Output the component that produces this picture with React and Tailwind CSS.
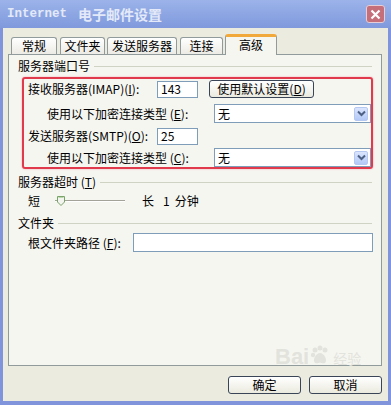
import React from "react";

const Key = ({ k }) => (
  <>
    (<span className="underline">{k}</span>)
  </>
);

function TextBox({ value, width }) {
  return (
    <div
      className={`${width} h-[17px] bg-white border border-[#7f9db9] pl-[3px] flex items-center leading-none`}
    >
      {value}
    </div>
  );
}

function Dropdown() {
  return (
    <div className="w-[157px] h-[19px] bg-white border border-[#7f9db9] flex items-center justify-between pl-[3px] pr-[2px]">
      <span className="leading-none">无</span>
      <div className="w-[14px] h-[14px] rounded-[2px] bg-linear-to-b from-[#dbe5fd] to-[#b3c9f7] border border-[#b5c8f2] flex items-center justify-center">
        <svg width="9" height="7" viewBox="0 0 9 7">
          <path d="M1 1.5 L4.5 5 L8 1.5" fill="none" stroke="#4d6185" strokeWidth="2" />
        </svg>
      </div>
    </div>
  );
}

function GroupTitle({ children }) {
  return (
    <div className="flex items-center h-[14px]">
      <span className="pr-[4px] leading-none">{children}</span>
      <div className="flex-1 border-t border-[#cfd3c4]" />
    </div>
  );
}

function XpButton({ children, width }) {
  return (
    <div
      className={`${width} h-[18px] rounded-[3px] border border-[#3a4558] bg-linear-to-b from-[#ffffff] to-[#ebeadf] flex items-center justify-center leading-none`}
    >
      {children}
    </div>
  );
}

function Tab({ label, width }) {
  return (
    <div
      className={`${width} h-[17px] border border-b-0 border-[#919b9c] rounded-t-[3px] bg-linear-to-b from-[#ffffff] to-[#ecebe5] flex items-center justify-center leading-none`}
    >
      {label}
    </div>
  );
}

export default function App() {
  return (
    <div className="w-[391px] h-[405px] bg-[#8094dc] flex flex-col px-[3px] pb-[4px] font-['Noto_Sans_CJK_SC',sans-serif] text-[12px] text-black">
      {/* title bar */}
      <div className="h-[28px] -mx-[3px] pl-[7px] pr-[6px] flex items-center justify-between bg-linear-to-b from-[#9cb3ea] to-[#7f99dc]">
        <div className="flex items-center font-bold text-[#e3e9f8]">
          <span className="font-['Liberation_Mono',monospace] text-[12.5px]">Internet</span>
          <span className="ml-[11px] text-[14px]">电子邮件设置</span>
        </div>
        <div className="w-[19px] h-[18px] rounded-[3px] bg-[#c46f79] border border-[#e6cdd6] flex items-center justify-center">
          <svg width="11" height="11" viewBox="0 0 11 11">
            <path d="M1.5 1.5 L9.5 9.5 M9.5 1.5 L1.5 9.5" stroke="#ffffff" strokeWidth="2.2" />
          </svg>
        </div>
      </div>

      {/* body */}
      <div className="flex-1 bg-[#ecebe0] flex flex-col pl-[5px] pr-[6px] pt-[5px]">
        <div className="h-[21px] flex items-end pl-[3px]">
          <Tab label="常规" width="w-[46px]" />
          <div className="ml-[3px]">
            <Tab label="文件夹" width="w-[45px]" />
          </div>
          <div className="ml-[2px]">
            <Tab label="发送服务器" width="w-[70px]" />
          </div>
          <div className="ml-[3px]">
            <Tab label="连接" width="w-[43px]" />
          </div>
          <div className="ml-[2px] w-[52px] h-[21px] -mb-px relative z-10 border border-b-0 border-[#919b9c] border-t-[3px] border-t-[#f2a93b] rounded-t-[3px] bg-[#f6f6f1] flex items-center justify-center leading-none pb-[2px]">
            高级
          </div>
        </div>

        {/* panel */}
        <div className="relative h-[312px] border border-[#919b9c] bg-[#f6f6f1] pl-[9px] pr-[9px] pt-[4px] flex flex-col">
          <GroupTitle>服务器端口号</GroupTitle>

          <div className="mt-[4px] ml-[4px] -mr-[1px] h-[92px] border-2 border-[#e23a4d] rounded-[3px] shadow-[0_0_2px_#f3a0aa] flex flex-col">
            <div className="mt-[1px] h-[18px] flex items-center">
              <div className="w-[133px] pl-[4px] leading-none whitespace-nowrap">
                接收服务器(IMAP)<Key k="I" />:
              </div>
              <TextBox value="143" width="w-[41px]" />
              <div className="ml-[11px]">
                <XpButton width="w-[105px]">
                  使用默认设置<Key k="D" />
                </XpButton>
              </div>
            </div>
            <div className="mt-[6px] h-[19px] flex items-center">
              <div className="w-[190px] pl-[23px] leading-none whitespace-nowrap">
                使用以下加密连接类型 <Key k="E" />:
              </div>
              <Dropdown />
            </div>
            <div className="mt-[4px] h-[18px] flex items-center">
              <div className="w-[133px] pl-[4px] leading-none whitespace-nowrap">
                发送服务器(SMTP)<Key k="O" />:
              </div>
              <TextBox value="25" width="w-[41px]" />
            </div>
            <div className="mt-[3px] h-[19px] flex items-center">
              <div className="w-[190px] pl-[23px] leading-none whitespace-nowrap">
                使用以下加密连接类型 <Key k="C" />:
              </div>
              <Dropdown />
            </div>
          </div>

          <div className="mt-[6px]">
            <GroupTitle>
              服务器超时 <Key k="T" />
            </GroupTitle>
          </div>
          <div className="mt-[4px] h-[16px] flex items-center pl-[10px] leading-none">
            <span>短</span>
            <svg className="ml-[15px]" width="70" height="16" viewBox="0 0 70 16">
              <line x1="0" y1="7.5" x2="70" y2="7.5" stroke="#a3a39a" strokeWidth="1" />
              <line x1="0" y1="8.5" x2="70" y2="8.5" stroke="#ffffff" strokeWidth="1" />
              <path d="M2.5 3.5 H9.5 V9 L6 12.5 L2.5 9 Z" fill="#f3f4ef" stroke="#7aa36a" strokeWidth="1" />
              <line x1="3.5" y1="4.5" x2="8.5" y2="4.5" stroke="#b9d6a8" strokeWidth="1" />
            </svg>
            <span className="ml-[17px]">长</span>
            <span className="ml-[9px]">1</span>
            <span className="ml-[5px]">分钟</span>
          </div>

          <div className="mt-[7px]">
            <GroupTitle>文件夹</GroupTitle>
          </div>
          <div className="mt-[3px] h-[19px] flex items-center">
            <div className="w-[115px] pl-[10px] leading-none whitespace-nowrap">
              根文件夹路径 <Key k="F" />:
            </div>
            <div className="flex-1 -mr-[1px] h-[19px] bg-white border border-[#7f9db9]" />
          </div>

          {/* faint watermark */}
          <div className="absolute left-[266px] top-[289px] flex items-end text-[#e2e3dc] leading-none pointer-events-none">
            <span className="font-['Liberation_Sans',sans-serif] font-bold text-[22px]">Bai</span>
            <svg className="mb-[2px]" width="22" height="22" viewBox="0 0 22 22">
              <circle cx="6" cy="6" r="2.5" fill="#e2e3dc" />
              <circle cx="11" cy="4" r="2.5" fill="#e2e3dc" />
              <circle cx="16" cy="6" r="2.5" fill="#e2e3dc" />
              <circle cx="4" cy="11" r="2.2" fill="#e2e3dc" />
              <path d="M11 9 C15 9 19 16 16 19 C14 20 12 18.5 11 18.5 C10 18.5 8 20 6 19 C3 16 7 9 11 9 Z" fill="#e2e3dc" />
            </svg>
            <span className="ml-[2px] mb-[3px] text-[14px]">经验</span>
          </div>
        </div>

        {/* buttons */}
        <div className="pt-[10px] flex justify-end gap-[8px]">
          <XpButton width="w-[73px]">确定</XpButton>
          <XpButton width="w-[73px]">取消</XpButton>
        </div>
      </div>
    </div>
  );
}
